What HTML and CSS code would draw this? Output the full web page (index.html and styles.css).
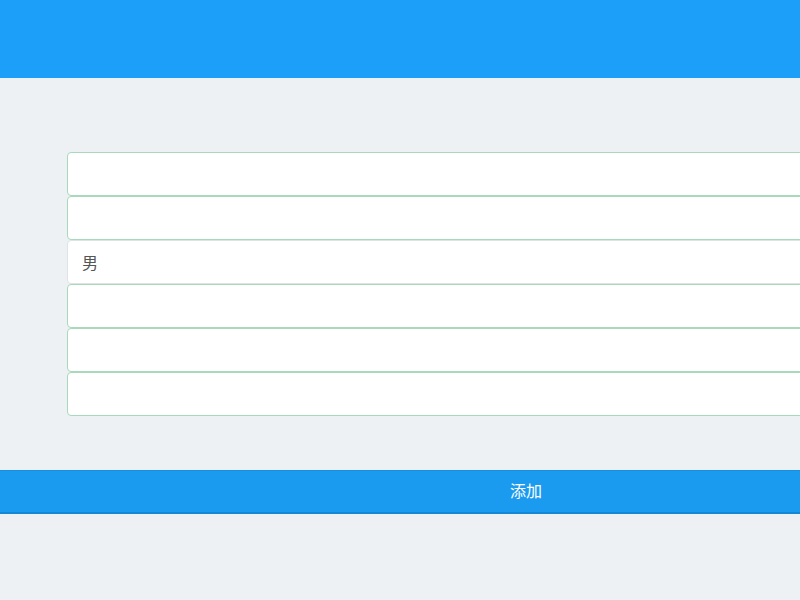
FILE: index.html
```html
<!DOCTYPE html>
<html lang="zh">
<head>
<meta charset="utf-8">
<link rel="stylesheet" href="styles.css">
</head>
<body>
<div class="frame">
  <div class="page">
    <header class="topbar"></header>
    <form class="form">
      <div class="fields">
        <input class="field valid" type="text" value="">
        <input class="field valid" type="text" value="">
        <input class="field plain" type="text" value="男">
        <input class="field valid" type="text" value="">
        <input class="field valid" type="text" value="">
        <input class="field valid" type="text" value="">
      </div>
      <button class="submit" type="button">添加</button>
    </form>
  </div>
</div>
</body>
</html>
```
FILE: styles.css
```css
html, body {
  margin: 0;
  padding: 0;
  background: #eef1f4;
  font-family: "Noto Sans CJK SC", "Liberation Sans", sans-serif;
}
.frame {
  width: 100%;
  height: 100vh;
  overflow: hidden;
}
.page {
  width: 1052px;
}
.topbar {
  width: 800px;
  height: 78px;
  background: #1c9ff8;
}
.form {
  display: flex;
  flex-direction: column;
  padding-top: 74px;
}
.fields {
  display: flex;
  flex-direction: column;
  padding: 0 67px;
}
.field {
  box-sizing: border-box;
  height: 44px;
  width: 100%;
  margin: 0;
  padding: 0 14px;
  border-radius: 4px;
  background: #fff;
  font-family: "Noto Sans CJK SC", sans-serif;
  font-size: 16px;
  color: #555;
  outline: none;
}
.field.valid {
  border: 1px solid #a9d9bb;
}
.field.plain {
  border: 1px solid #dfe3e4;
}
.submit {
  margin-top: 54px;
  height: 44px;
  width: 1052px;
  border: none;
  border-top: 1px solid #1590e0;
  border-bottom: 2px solid #1488d6;
  background: #1a9bf0;
  color: #fff;
  font-family: "Noto Sans CJK SC", sans-serif;
  font-size: 16px;
  padding: 0 0 3px;
}
```
